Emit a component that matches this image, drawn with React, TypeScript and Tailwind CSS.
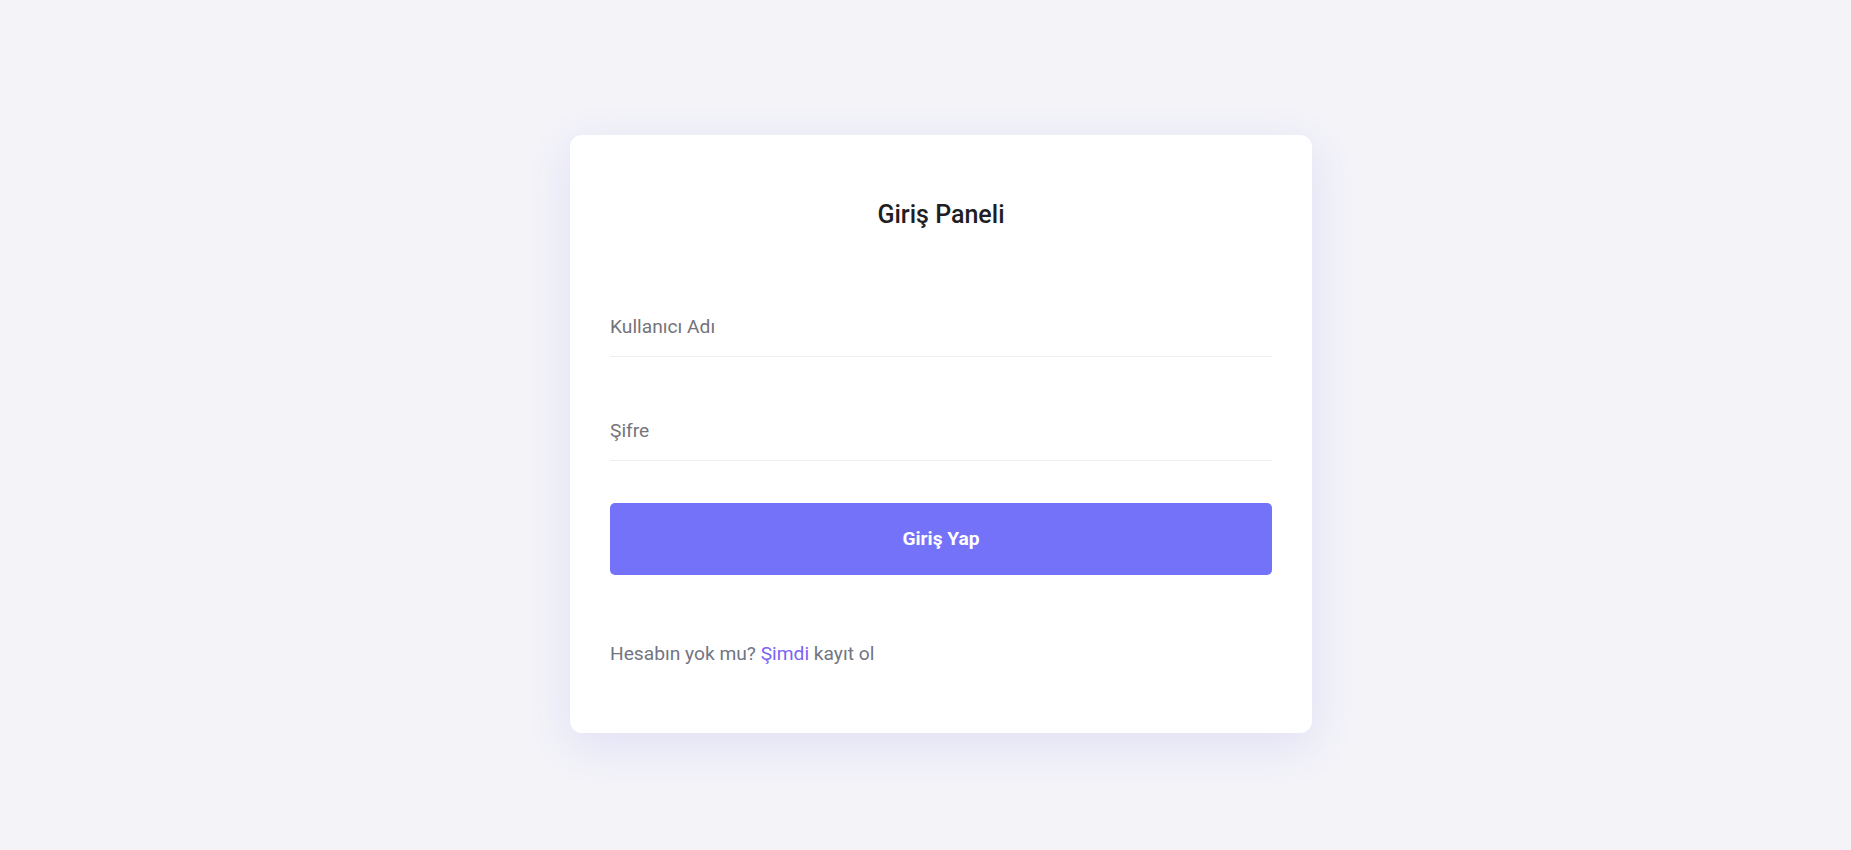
import React from "react";

export default function App() {
  return (
    <div
      className="min-h-screen w-full bg-[#f3f3f8] flex justify-center"
      style={{ fontFamily: "Roboto, 'Noto Sans', sans-serif" }}
    >
      <div className="mt-[135px] mb-[117px] ml-[31px] w-[742px] bg-white rounded-xl shadow-[0_12px_45px_rgba(100,90,240,0.12)] px-10 pt-[64px] pb-[62px] flex flex-col">
        <h1 className="text-center text-[25px] leading-8 font-medium text-[#1e1e24]">
          Giriş Paneli
        </h1>
        <input
          type="text"
          placeholder="Kullanıcı Adı"
          className="mt-[71px] h-[55px] pb-[6px] w-full border-b border-[#efeff2] text-[19.2px] text-[#333] placeholder:text-[#74747a] outline-none bg-transparent"
        />
        <input
          type="password"
          placeholder="Şifre"
          className="mt-[49px] h-[55px] pb-[6px] w-full border-b border-[#efeff2] text-[19.2px] text-[#333] placeholder:text-[#74747a] outline-none bg-transparent"
        />
        <button className="mt-[42px] h-[72px] w-full rounded-[5px] bg-[#7572fa] text-white text-[19.2px] font-bold">
          Giriş Yap
        </button>
        <p className="mt-[65px] text-[19.2px] leading-7 text-[#727582]">
          Hesabın yok mu? <a className="text-[#7a63f5]">Şimdi</a> kayıt ol
        </p>
      </div>
    </div>
  );
}
